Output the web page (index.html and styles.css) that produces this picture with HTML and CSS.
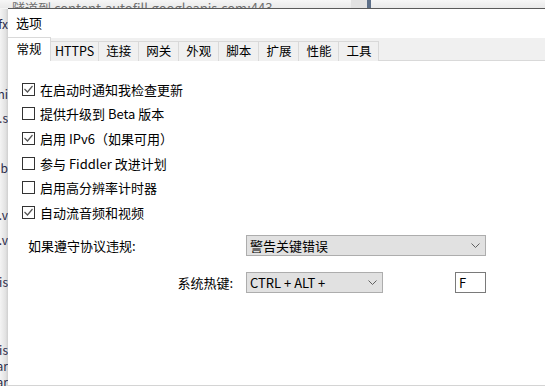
FILE: index.html
```html
<html>
<head>
    <title>选项</title>
    <link rel="stylesheet" href="styles.css">
</head>
<body>
    <div class="desk">
        <div class="desk-top">
            <span class="desk-top-text">隧道到 content-autofill.googleapis.com:443</span>
            <span class="desk-top-split"></span>
            <span class="desk-top-bar"></span>
        </div>
        <div class="desk-left">
            <span>fx</span>
            <span>ni</span>
            <span>.s</span>
            <span>b</span>
            <span>.v</span>
            <span>.v</span>
            <span>gis</span>
            <span>gis</span>
            <span>ar</span>
            <span>ar</span>
        </div>

        <div class="dialog">
            <div class="dialog-title">选项</div>

            <div class="tabs">
                <div class="tab tab-active">常规</div>
                <div class="tab tab-latin">HTTPS</div>
                <div class="tab">连接</div>
                <div class="tab">网关</div>
                <div class="tab">外观</div>
                <div class="tab">脚本</div>
                <div class="tab">扩展</div>
                <div class="tab">性能</div>
                <div class="tab">工具</div>
            </div>

            <div class="page">
                <div class="checks">
                    <label class="check">
                        <span class="box"><svg width="11" height="11" viewBox="0 0 11 11"><polyline points="1.5,5 4.5,8 9.5,2" /></svg></span>
                        在启动时通知我检查更新
                    </label>
                    <label class="check">
                        <span class="box"></span>
                        提供升级到 Beta 版本
                    </label>
                    <label class="check">
                        <span class="box"><svg width="11" height="11" viewBox="0 0 11 11"><polyline points="1.5,5 4.5,8 9.5,2" /></svg></span>
                        启用 IPv6（如果可用）
                    </label>
                    <label class="check">
                        <span class="box"></span>
                        参与 Fiddler 改进计划
                    </label>
                    <label class="check">
                        <span class="box"></span>
                        启用高分辨率计时器
                    </label>
                    <label class="check">
                        <span class="box"><svg width="11" height="11" viewBox="0 0 11 11"><polyline points="1.5,5 4.5,8 9.5,2" /></svg></span>
                        自动流音频和视频
                    </label>
                </div>

                <div class="form">
                    <div class="form-label">如果遵守协议违规:</div>
                    <div class="select select-wide">
                        <span>警告关键错误</span>
                        <svg width="9" height="5" viewBox="0 0 9 5"><polyline points="0.5,0.5 4.5,4.5 8.5,0.5" /></svg>
                    </div>

                    <div class="form-label form-label-right">系统热键:</div>
                    <div class="form-pair">
                        <div class="select select-short">
                            <span>CTRL + ALT +</span>
                            <svg width="9" height="5" viewBox="0 0 9 5"><polyline points="0.5,0.5 4.5,4.5 8.5,0.5" /></svg>
                        </div>
                        <div class="key">F</div>
                    </div>
                </div>
            </div>
        </div>
    </div>
</body>
</html>
```

FILE: styles.css
```css
html, body {
    margin: 0;
    padding: 0;
    width: 545px;
    height: 386px;
    overflow: hidden;
    font-family: "Noto Sans CJK SC", "Noto Sans", sans-serif;
    font-size: 13px;
    color: #000;
    background: #f3f3f3;
}

.desk {
    position: relative;
    width: 545px;
    height: 386px;
    overflow: hidden;
}

.desk-top {
    height: 8px;
    display: flex;
    overflow: hidden;
    background: linear-gradient(#f6f6f6, #e9e9e9);
}

.desk-top-text {
    margin-left: 12px;
    width: 339px;
    height: 8px;
    color: #6f6f6f;
    white-space: nowrap;
    overflow: hidden;
    font-size: 13px;
    line-height: 15px;
}

.desk-top-split {
    width: 16px;
    background: #e2e2e2;
}

.desk-top-bar {
    width: 4px;
    background: #5d6f88;
}

.desk-left {
    position: absolute;
    left: 0;
    top: 9px;
    width: 8px;
    height: 377px;
    display: flex;
    flex-direction: column;
    align-items: flex-end;
    background: linear-gradient(to right, #f4f4f4, #e2e2e2 70%, #cfcfcf);
    overflow: hidden;
    font-size: 12px;
    line-height: 14px;
    color: #2b2b4a;
}

.desk-left span {
    white-space: nowrap;
}

.desk-left span:nth-child(1) { margin-top: 8px; }
.desk-left span:nth-child(2) { margin-top: 56px; }
.desk-left span:nth-child(3) { margin-top: 10px; }
.desk-left span:nth-child(4) { margin-top: 36px; }
.desk-left span:nth-child(5) { margin-top: 33px; }
.desk-left span:nth-child(6) { margin-top: 11px; }
.desk-left span:nth-child(7) { margin-top: 28px; }
.desk-left span:nth-child(8) { margin-top: 54px; }
.desk-left span:nth-child(9) { margin-top: 2px; }
.desk-left span:nth-child(10) { margin-top: 2px; }

.dialog {
    position: absolute;
    left: 8px;
    top: 8px;
    width: 560px;
    height: 376px;
    background: #fff;
    border-top: 1px solid #595959;
    border-bottom: 1px solid #d4d4d4;
    display: flex;
    flex-direction: column;
}

.dialog-title {
    height: 29px;
    padding-left: 8px;
    line-height: 28px;
    color: #000;
}

.tabs {
    height: 22px;
    display: flex;
    align-items: flex-end;
    background: #f0f0f0;
    border-bottom: 1px solid #d9d9d9;
    font-size: 12.5px;
}

.tab {
    height: 19px;
    padding: 0 7px;
    min-width: 25px;
    text-align: center;
    line-height: 18px;
    border: 1px solid #d9d9d9;
    border-bottom: none;
    border-left: none;
    margin-bottom: -1px;
    background: #f0f0f0;
}

.tab-latin {
    padding: 0 4px;
}

.tab-active {
    height: 23px;
    width: 28px;
    padding: 0 7px;
    background: #fff;
    line-height: 22px;
    margin-bottom: -1px;
}

.page {
    flex: 1;
    padding-left: 14px;
}

.checks {
    padding-top: 16px;
    display: flex;
    flex-direction: column;
}

.check {
    height: 24.6px;
    display: flex;
    align-items: center;
    gap: 5px;
}

.box {
    width: 11px;
    height: 11px;
    border: 1px solid #333;
    background: #fff;
    display: flex;
}

.box polyline {
    fill: none;
    stroke: #555;
    stroke-width: 1.2;
}

.form {
    margin-top: 10px;
    padding-left: 6px;
    display: grid;
    grid-template-columns: 218px 240px;
    row-gap: 16px;
    align-items: center;
}

.form-label {
    padding-top: 1px;
}

.form-label-right {
    text-align: right;
    padding-right: 13px;
}

.select {
    height: 19px;
    border: 1px solid #adadad;
    background: #e1e1e1;
    display: flex;
    align-items: center;
    justify-content: space-between;
    padding: 0 5px 0 3px;
}

.select polyline {
    fill: none;
    stroke: #606060;
    stroke-width: 1;
}

.select-short {
    width: 127px;
}

.form-pair {
    display: flex;
    justify-content: space-between;
}

.key {
    width: 26px;
    height: 19px;
    padding-left: 3px;
    line-height: 19px;
    border: 1px solid #7a7a7a;
    background: #fff;
}
```
